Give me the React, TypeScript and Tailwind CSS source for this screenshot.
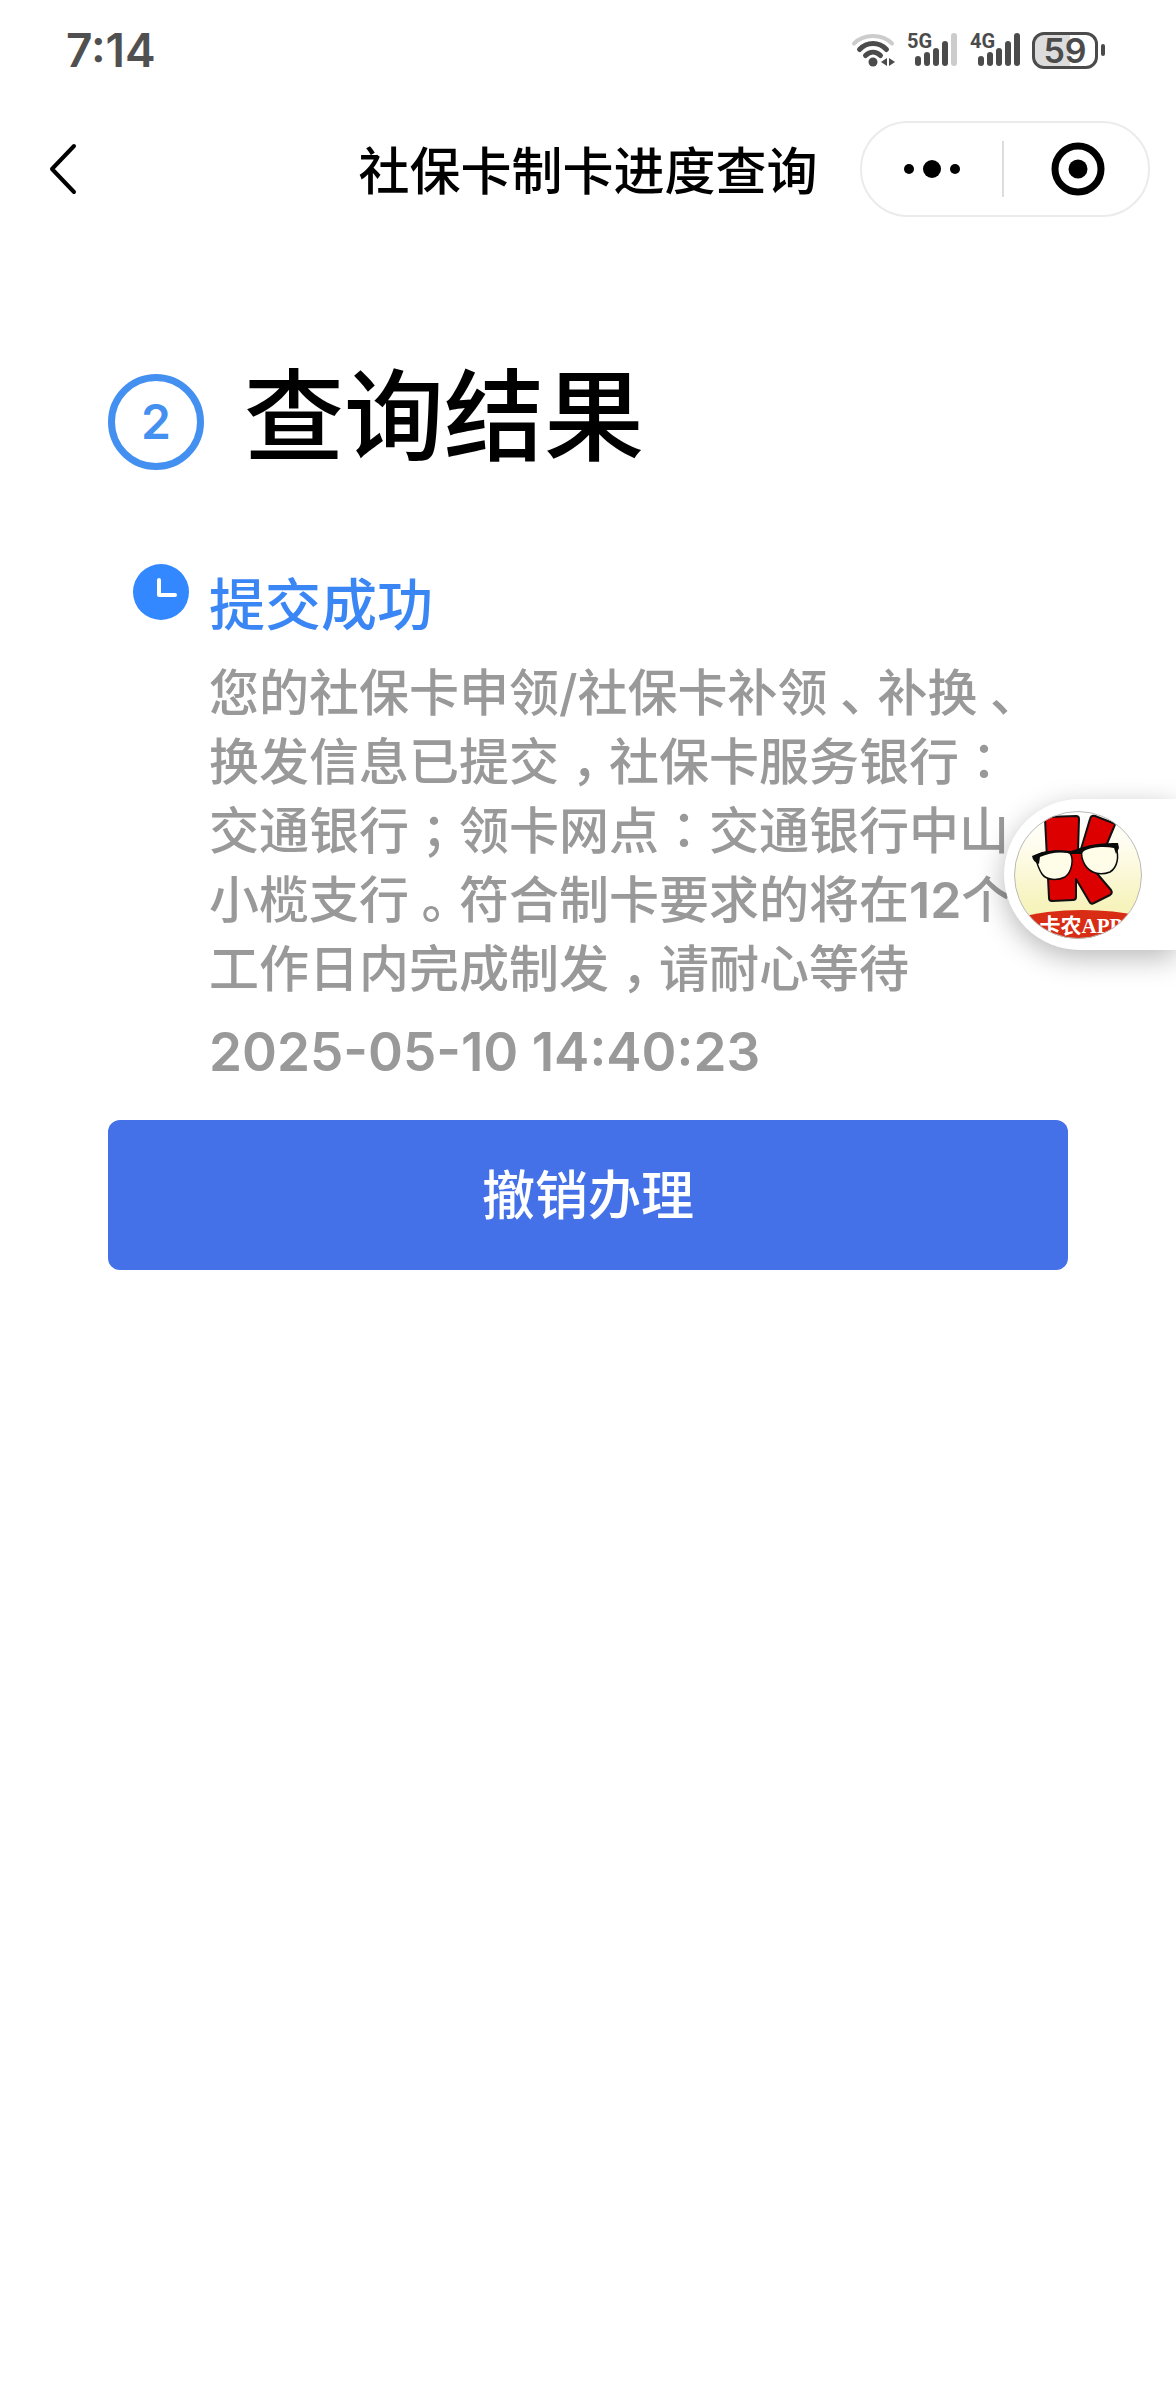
import React from "react";

const SIGNAL_BARS = [
  { x: 9, y: 24 },
  { x: 18, y: 20 },
  { x: 27, y: 16 },
  { x: 36, y: 9 },
  { x: 45, y: 1 },
];

function Signal({ label, strength }: { label: string; strength: number }) {
  return (
    <svg viewBox="0 0 52 36" className="h-9 w-[52px] overflow-visible" role="img" aria-label={`${label} 信号`}>
      {SIGNAL_BARS.map((bar, i) => (
        <rect
          key={bar.x}
          x={bar.x}
          y={bar.y}
          width="6"
          height={34 - bar.y}
          rx="3"
          fill={i < strength ? "#4b4b4b" : "#cccccc"}
        />
      ))}
      <text x="1" y="16" fill="#4b4b4b" className="font-['Roboto',sans-serif] text-[20px] font-bold">
        {label}
      </text>
    </svg>
  );
}

function Wifi() {
  return (
    <svg viewBox="0 0 44 36" className="h-9 w-11" fill="none" strokeLinecap="round" strokeWidth="5" role="img" aria-label="无线网络">
      <path d="M3 11.500C13 1.500 31 1.500 41 11.500" stroke="#cccccc" strokeWidth="4" />
      <path d="M8.500 17.500C16 9.500 28 9.500 35.500 17.500" stroke="#4b4b4b" />
      <path d="M14.500 23.500C19 19 25 19 29.500 23.500" stroke="#4b4b4b" />
      <circle cx="22" cy="30" r="4.500" fill="#4b4b4b" />
      <path d="M36 26v8l-6-4zM38 26v8l6-4z" fill="#4b4b4b" />
    </svg>
  );
}

function Battery() {
  return (
    <div className="flex items-center gap-[3px]">
      <div className="h-[37px] w-[66px] rounded-xl border-3 border-[#4b4b4b] bg-linear-to-r from-[#dcdcdc] from-59% to-white to-59% text-center font-['Inter',sans-serif] text-[34px] leading-[31px] font-semibold text-[#4b4b4b]">
        59
      </div>
      <div className="h-3 w-1 rounded-full bg-[#4b4b4b]" />
    </div>
  );
}

function StatusBar() {
  return (
    <div className="flex h-25 items-center justify-between pr-[71px] pl-[66px]">
      <time className="font-['Inter',sans-serif] text-[46px] leading-none font-semibold text-[#505050]">7:14</time>
      <div className="flex items-center gap-[11px]">
        <Wifi />
        <Signal label="5G" strength={4} />
        <Signal label="4G" strength={5} />
        <Battery />
      </div>
    </div>
  );
}

function NavBar() {
  return (
    <header className="grid h-[138px] grid-cols-[1fr_auto_1fr] items-center px-[26px]">
      <button type="button" aria-label="返回" className="w-15 pl-4">
        <svg viewBox="0 0 44 56" className="h-14 w-11" fill="none" stroke="#000" strokeWidth="4" strokeLinecap="round" strokeLinejoin="round">
          <path d="M32 5L10 28L32 51" />
        </svg>
      </button>
      <h1 className="pt-1 text-[51px] leading-none font-medium text-black">社保卡制卡进度查询</h1>
      <div className="flex h-24 w-[290px] items-center justify-self-end rounded-full border-2 border-[#ebebeb]">
        <button type="button" aria-label="更多" className="flex flex-1 items-center justify-center gap-[9px]">
          <span className="size-[10px] rounded-full bg-black" />
          <span className="size-[18px] rounded-full bg-black" />
          <span className="size-[10px] rounded-full bg-black" />
        </button>
        <span className="h-14 w-0.5 bg-[#dddddd]" />
        <button type="button" aria-label="关闭" className="flex flex-1 justify-center pl-1">
          <svg viewBox="0 0 54 54" className="size-[54px]">
            <circle cx="27" cy="27" r="23" fill="none" stroke="#000" strokeWidth="7" />
            <circle cx="27" cy="27" r="9.500" />
          </svg>
        </button>
      </div>
    </header>
  );
}

/** A full-width punctuation mark set in the middle of its cell. */
function Mark({ children }: { children: string }) {
  return (
    <span className="inline-block w-[1em] text-center leading-none [font-feature-settings:'halt']">{children}</span>
  );
}

function withMarks(text: string) {
  return text.split(/([，、。；：])/).map((part, i) => {
    if (part === "：") {
      return (
        <span key={i} lang="zh-TW" className="font-['Noto_Sans_CJK_TC',sans-serif] leading-none">
          {part}
        </span>
      );
    }
    return i % 2 ? <Mark key={i}>{part}</Mark> : part;
  });
}

function ClockIcon() {
  return (
    <svg viewBox="0 0 56 56" className="size-14 shrink-0" aria-hidden="true">
      <circle cx="28" cy="28" r="28" fill="#3388ff" />
      <path d="M26 16V31H42" fill="none" stroke="#fff" strokeWidth="4" strokeLinecap="round" strokeLinejoin="round" />
    </svg>
  );
}

function FloatingApp() {
  return (
    <a
      href="#app"
      aria-label="卡农APP"
      className="absolute top-[799px] right-0 flex h-[151px] w-43 items-center rounded-l-full bg-white pl-[10px] shadow-[0_8px_28px_rgba(0,0,0,0.28)]"
    >
      <svg viewBox="0 0 128 128" className="size-32">
        <defs>
          <linearGradient id="cream" x1="0" y1="0" x2="0" y2="1">
            <stop offset="0" stopColor="#ffffff" />
            <stop offset="0.25" stopColor="#fffdf0" />
            <stop offset="0.75" stopColor="#f6f3bc" />
          </linearGradient>
          <clipPath id="disc">
            <circle cx="64" cy="64" r="63.500" />
          </clipPath>
        </defs>
        <g clipPath="url(#disc)">
          <rect width="128" height="128" fill="url(#cream)" />
          <path
            d="M31 8Q31 6 34 6L62 5Q65 5 65 8L64 40L67 38L76 8Q77 4 81 5L99 12Q102 13 100 16L84 54L80 59L97 79Q99 82 96 84L80 92Q77 94 75 90L62 68V86Q62 89 59 89L38 90Q35 90 35 87Z"
            fill="#dc0000"
            stroke="#111"
            strokeWidth="2"
            strokeLinejoin="round"
          />
          <g fill="#fffde8" stroke="#0a0a0a" strokeWidth="1.500">
            <path d="M21 45C30 40 49 39 56 42C60 48 58 61 51 66C43 70 32 69 28 63C24 57 23 52 21 45Z" />
            <path d="M68 39C78 34 94 33 102 36C105 45 104 56 96 61C86 65 76 62 71 54C68 49 67 44 68 39Z" />
          </g>
          <path
            d="M18 45L28 41C38 39 48 39 57 40L66 37C77 33 90 32 104 32L105 37L102 43L100 37C90 35 77 36 70 40L67 43L57 43C47 40 35 42 26 46L25 53Q19 51 18 45Z"
            fill="#0a0a0a"
          />
          <path d="M0 108C36 97 86 96 128 105V128H0Z" fill="#d82c14" />
          <text
            x="67"
            y="122"
            textAnchor="middle"
            fill="#fff"
            className="font-['Liberation_Serif','Noto_Sans_CJK_SC',serif] text-[21px] font-bold"
          >
            卡农APP
          </text>
        </g>
        <circle cx="64" cy="64" r="63.500" fill="none" stroke="#b9b9b9" strokeWidth="1" />
      </svg>
    </a>
  );
}

export default function App() {
  return (
    <div lang="zh-CN" className="relative min-h-screen bg-white font-['Inter','Noto_Sans_CJK_SC',sans-serif] font-medium">
      <StatusBar />
      <NavBar />
      <main className="px-27 pt-28">
        <div className="flex items-center gap-10">
          <span className="mt-2.5 flex size-24 items-center justify-center rounded-full border-[7px] border-[#4490f0] text-[48px] leading-none font-semibold text-[#4490f0]">
            2
          </span>
          <h2 className="text-[100px] leading-[134px] font-medium text-black">查询结果</h2>
        </div>
        <section className="flex gap-5 px-[25px] pt-20">
          <ClockIcon />
          <div className="min-w-0 flex-1 pt-[5px]">
            <h3 className="text-[56px] leading-[72px] text-[#3a86f5]">提交成功</h3>
            <p className="mt-[18px] text-[50px] leading-[69px] text-[#999999]">
              {withMarks(
                "您的社保卡申领/社保卡补领、补换、换发信息已提交，社保卡服务银行：交通银行；领卡网点：交通银行中山小榄支行。符合制卡要求的将在"
              )}
              <span className="font-semibold">12</span>
              {withMarks("个工作日内完成制发，请耐心等待")}
            </p>
            <time className="mt-3 block text-[53px] leading-[72px] font-semibold text-[#999999]">
              2025-05-10 14:40:23
            </time>
          </div>
        </section>
        <button type="button" className="mt-8 h-[150px] w-full rounded-xl bg-[#4471e8] pt-1 text-[53px] font-medium text-white">
          撤销办理
        </button>
      </main>
      <FloatingApp />
    </div>
  );
}
